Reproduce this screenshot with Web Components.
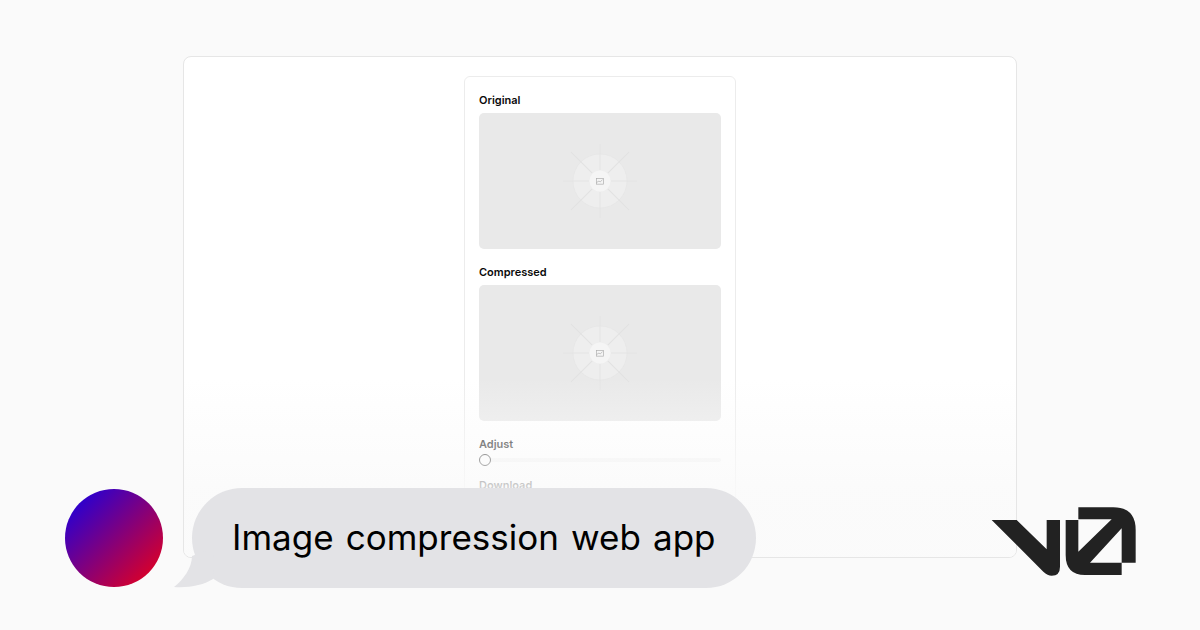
<!DOCTYPE html>
<html>
<head>
<meta charset="utf-8">
<title>Image compression web app</title>
<style>
    html, body { margin: 0; height: 100%; }
    body { background: #fafafa; font-family: Inter, "Liberation Sans", sans-serif; }
</style>
</head>
<body>
<og-page>
    <app-window>
        <app-card>
            <drop-zone>Original</drop-zone>
            <drop-zone>Compressed</drop-zone>
            <range-field>Adjust</range-field>
            <card-label>Download</card-label>
        </app-card>
    </app-window>
    <chat-row slot="over">Image compression web app</chat-row>
</og-page>

<script>
class base extends HTMLElement
{
    constructor(){
        super();
        this.shadow = this.attachShadow({mode: 'open'})
        this.shadow.innerHTML = `<style>${this.css}</style>${this.html}`
    }
    get css(){ return '' }
    get html(){ return '<slot></slot>' }
}

customElements.define('og-page', class extends base {
    get css(){
        return `:host{
            display: flex;
            flex-direction: column;
            align-items: center;
            position: relative;
            width: 1200px;
            height: 630px;
            padding-top: 56px;
            box-sizing: border-box;
            overflow: hidden;
        }`
    }
    get html(){
        return `<slot></slot><slot name="over"></slot>`
    }
})

customElements.define('app-window', class extends base {
    get css(){
        return `:host{
            display: flex;
            justify-content: center;
            position: relative;
            flex: none;
            width: 834px;
            height: 502px;
            padding-top: 19px;
            box-sizing: border-box;
            background: #fff;
            border: 1px solid #e6e6e6;
            border-radius: 8px;
            overflow: hidden;
        }
        .fade{
            position: absolute;
            left: 0; right: 0; top: 321px; bottom: 0;
            background: linear-gradient(to bottom, rgba(250,250,250,0) 0, rgba(250,250,250,.84) 112px, rgba(250,250,250,.92) 100%);
        }`
    }
    get html(){
        return `<slot></slot><div class="fade"></div>`
    }
})

customElements.define('app-card', class extends base {
    get css(){
        return `:host{
            display: flex;
            flex-direction: column;
            flex: none;
            width: 272px;
            height: 520px;
            padding: 16px 14px;
            box-sizing: border-box;
            border: 1px solid #ececec;
            border-radius: 6px;
            background: #fff;
        }`
    }
})

customElements.define('card-label', class extends base {
    get css(){
        return `:host{
            display: block;
            font: 600 11px/14px Inter, "Liberation Sans", sans-serif;
            color: #0a0a0a;
        }`
    }
})

customElements.define('drop-zone', class extends base {
    get css(){
        return `:host{
            display: block;
            margin-bottom: 16px;
        }
        .label{
            font: 600 11px/14px Inter, "Liberation Sans", sans-serif;
            color: #0a0a0a;
            margin-bottom: 6px;
        }
        .zone{
            display: flex;
            align-items: center;
            justify-content: center;
            height: 136px;
            background: #e9e9e9;
            border-radius: 5px;
        }
        svg{ display: block; }`
    }
    get html(){
        // spokes run out past the outer ring, the small picture glyph sits in the middle
        const spokes = [0,45,90,135,180,225,270,315].map(a=>
            `<line x1="50" y1="39" x2="50" y2="${a % 90 ? 9 : 13}" stroke="${a % 90 ? '#e1e1e1' : '#e4e4e4'}" transform="rotate(${a} 50 50)"/>`
        ).join('');
        return `<div class="label"><slot></slot></div>
        <div class="zone">
            <svg width="100" height="100" viewBox="0 0 100 100" fill="none">
                <circle cx="50" cy="50" r="27" fill="#eeeeee" stroke="#e4e4e4" stroke-width=".6"/>
                <g stroke-width="1">${spokes}</g>
                <circle cx="50" cy="50" r="10.5" fill="#f5f5f5"/>
                <g stroke="#aeaeae" stroke-width=".7">
                    <rect x="46.35" y="47.35" width="7.3" height="5.8"/>
                    <path d="M46.5 51.5l2.5-1.5 1.2 1 2.3-2.4"/>
                </g>
            </svg>
        </div>`
    }
})

customElements.define('range-field', class extends base {
    get css(){
        return `:host{
            display: block;
            margin-bottom: 11px;
        }
        .label{
            font: 600 11px/14px Inter, "Liberation Sans", sans-serif;
            color: #0a0a0a;
        }
        .track{
            position: relative;
            height: 4px;
            margin: 7px 0 5px;
            background: #f3f3f3;
            border-radius: 2px;
        }
        .thumb{
            position: absolute;
            left: 0; top: -4px;
            width: 12px; height: 12px;
            box-sizing: border-box;
            background: #fff;
            border: 1px solid #111;
            border-radius: 50%;
        }`
    }
    get html(){
        return `<div class="label"><slot></slot></div><div class="track"><div class="thumb"></div></div>`
    }
})

customElements.define('chat-row', class extends base {
    get css(){
        return `:host{
            position: absolute;
            left: 65px; right: 64px; top: 488px;
            height: 100px;
            display: flex;
            align-items: center;
        }
        .avatar{
            flex: none;
            width: 98px; height: 98px;
            border-radius: 50%;
            background: linear-gradient(135deg, #2a00d0 12%, #d8002a 88%);
        }
        .bubble{
            position: relative;
            margin-left: 29px;
            height: 100px;
            padding: 0 40px 2px 40px;
            box-sizing: border-box;
            display: flex;
            align-items: center;
            background: #e3e3e6;
            border-radius: 50px;
            font: 400 35px/1 Inter, "Liberation Sans", sans-serif;
            word-spacing: 2.3px;
            color: #000;
            white-space: nowrap;
        }
        .tail{
            position: absolute;
            left: -18px; bottom: 0;
        }
        .logo{
            display: block;
            align-self: flex-start;
            margin: 7px -14px 0 auto;
        }`
    }
    get html(){
        return `<div class="avatar"></div>
        <div class="bubble">
            <svg class="tail" width="50" height="50" viewBox="0 0 50 50"><path fill="#e3e3e6" d="M18 18C18 30 9 42 0 49C15 50 30 47 39 41L40 10Z"/></svg>
            <slot></slot>
        </div>
        <svg class="logo" width="175" height="95" viewBox="0 0 525 285" fill="#222">
            <path d="M50 75H125L215 163V75H255V215Q255 242 230 242Q218 242 205 230Z"/>
            <path d="M272 75H310V170L410 73H310V37H415Q482 37 482 105V203H440V100L345 203H440V240H330Q272 240 272 180Z"/>
        </svg>`
    }
})
</script>
</body>
</html>
